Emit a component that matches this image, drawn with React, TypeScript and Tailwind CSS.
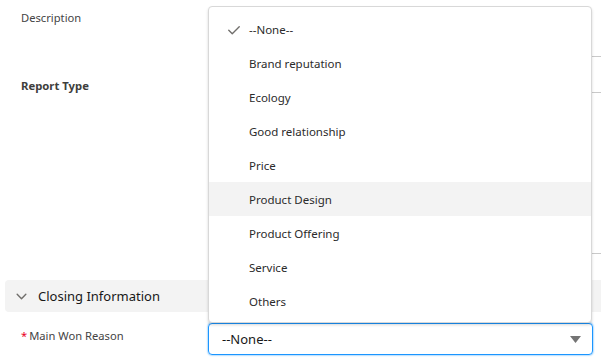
import React from 'react';

const options = [
    'Brand reputation',
    'Ecology',
    'Good relationship',
    'Price',
    'Product Design',
    'Product Offering',
    'Service',
    'Others',
];

export default function App() {
    return (
        <div
            className="relative w-[601px] h-[358px] overflow-hidden bg-white text-[#3e3e3c]"
            style={{ fontFamily: '"Noto Sans", "Open Sans", sans-serif' }}
        >
            {/* Form rows */}
            <div className="flex flex-col">
                <div className="flex h-[57px]">
                    <div className="w-[208px] pl-[21px] pt-[10px] text-[11.2px] text-[#444]">Description</div>
                    <div className="flex-1 border-b border-[#c9c9c9]"></div>
                </div>
                <div className="flex h-[36px]">
                    <div className="w-[208px] pl-[21px] pt-[21px] text-[11.3px] font-bold text-[#3e3e3c]">Report Type</div>
                    <div className="flex-1 border-b border-[#c9c9c9]"></div>
                </div>
                <div className="flex h-[161px]">
                    <div className="w-[208px]"></div>
                    <div className="flex-1 border-b border-[#c9c9c9]"></div>
                </div>

                {/* Closing Information section */}
                <div className="mt-[26px] ml-[5px] h-[32px] flex items-center gap-[10px] pl-[10px] pt-[1px] bg-[#f3f3f3] rounded-l-[4px]">
                    <svg width="13" height="13" viewBox="0 0 24 24" fill="none" stroke="#706e6b" strokeWidth="2.6" strokeLinecap="round" strokeLinejoin="round">
                        <path d="M4 8l8 8 8-8" />
                    </svg>
                    <span className="text-[13px] text-[#181818]">Closing Information</span>
                </div>

                <div className="flex mt-[11px]">
                    <div className="w-[208px] pl-[21px] pt-[5px] text-[11.2px] text-[#444]">
                        <span className="text-[#ea001e] mr-[2px]">*</span>Main Won Reason
                    </div>
                    <div className="w-[385px] h-[32px] rounded-[4px] border border-[#1b96ff] shadow-[0_0_2px_#1b96ff] flex items-center justify-between pl-[13px] pr-[11px] pt-[1px]">
                        <span className="text-[13px] text-[#181818]">--None--</span>
                        <svg width="11" height="7" viewBox="0 0 11 7">
                            <path d="M0 0h11L5.5 7z" fill="#747474" />
                        </svg>
                    </div>
                </div>
            </div>

            {/* Dropdown menu */}
            <div className="absolute left-[208px] top-[6px] w-[384px] h-[317px] bg-white border border-[#d8d8d8] rounded-[4px] shadow-[0_2px_3px_rgba(0,0,0,0.16)] py-[5px]">
                <div className="h-[34px] flex items-center pt-[2px] text-[11.5px] text-[#2b2b2b]">
                    <svg className="ml-[18px] mr-[8px]" width="14" height="14" viewBox="0 0 24 24" fill="none" stroke="#706e6b" strokeWidth="2.4" strokeLinecap="round" strokeLinejoin="round">
                        <path d="M3 12.5l6 6L21 6.5" />
                    </svg>
                    --None--
                </div>
                {options.map((o) => (
                    <div
                        key={o}
                        className={`h-[34px] flex items-center pt-[2px] pl-[40px] text-[11.5px] text-[#2b2b2b] ${o === 'Product Design' ? 'bg-[#f3f3f3]' : ''}`}
                    >
                        {o}
                    </div>
                ))}
            </div>
        </div>
    );
}
